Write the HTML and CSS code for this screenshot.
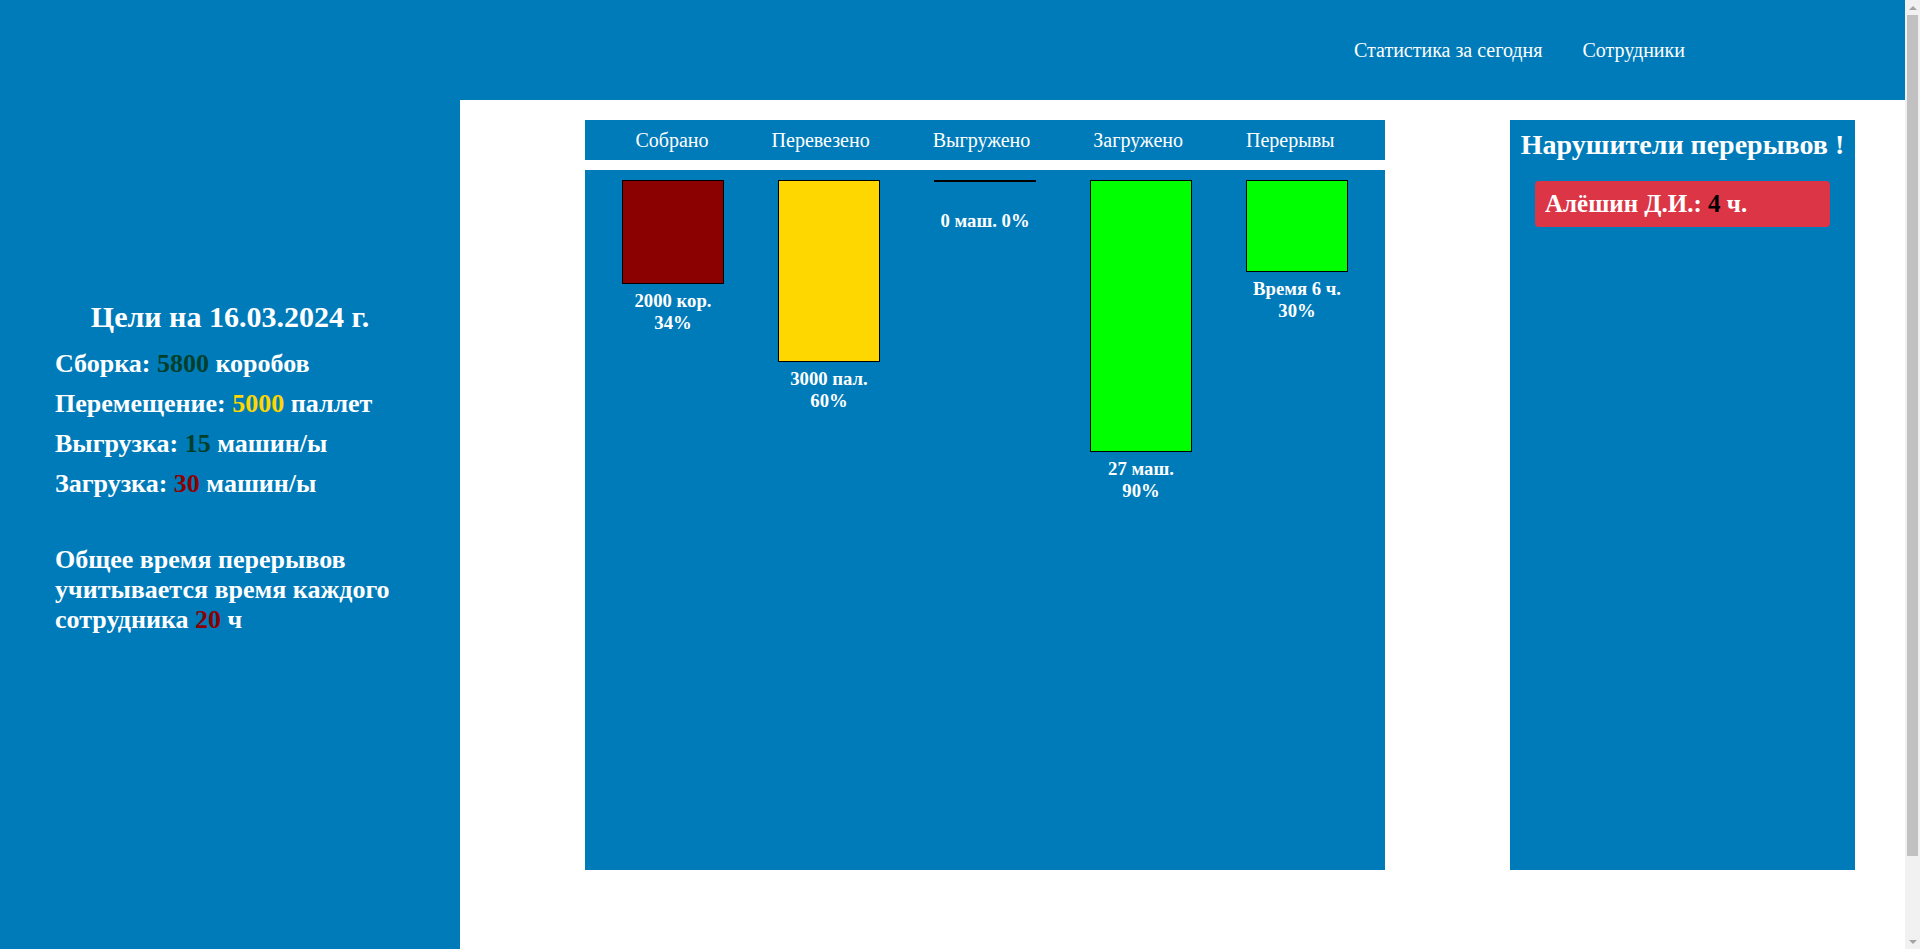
FILE: index.html
```html
<!DOCTYPE html>
<html lang="ru">
<head>
<meta charset="utf-8">
<title>Статистика</title>
<link rel="stylesheet" href="styles.css">
</head>
<body>
<header class="topbar">
  <nav class="nav">
    <a class="nav-link" href="#">Статистика за сегодня</a>
    <a class="nav-link" href="#">Сотрудники</a>
  </nav>
</header>
<div class="layout">
  <aside class="sidebar">
    <h2 class="goals-title">Цели на 16.03.2024 г.</h2>
    <div class="goals">
      <div class="goal">Сборка: <span class="num-green">5800</span> коробов</div>
      <div class="goal">Перемещение: <span class="num-gold">5000</span> паллет</div>
      <div class="goal">Выгрузка: <span class="num-green">15</span> машин/ы</div>
      <div class="goal">Загрузка: <span class="num-red">30</span> машин/ы</div>
    </div>
    <p class="breaks-note">Общее время перерывов учитывается время каждого сотрудника <span class="num-red">20</span> ч</p>
  </aside>
  <main class="content">
    <section class="chart">
      <div class="chart-head">
        <span>Собрано</span>
        <span>Перевезено</span>
        <span>Выгружено</span>
        <span>Загружено</span>
        <span>Перерывы</span>
      </div>
      <div class="chart-body">
        <div class="col">
          <div class="bar bar-red" style="height: 102px"></div>
          <div class="bar-label">2000 кор.<br>34%</div>
        </div>
        <div class="col">
          <div class="bar bar-gold" style="height: 180px"></div>
          <div class="bar-label">3000 пал.<br>60%</div>
        </div>
        <div class="col">
          <div class="bar bar-green" style="height: 0px"></div>
          <div class="bar-label bar-label-empty">0 маш. 0%</div>
        </div>
        <div class="col">
          <div class="bar bar-green" style="height: 270px"></div>
          <div class="bar-label">27 маш.<br>90%</div>
        </div>
        <div class="col">
          <div class="bar bar-green" style="height: 90px"></div>
          <div class="bar-label">Время 6 ч.<br>30%</div>
        </div>
      </div>
    </section>
    <section class="violators">
      <h2 class="violators-title">Нарушители перерывов !</h2>
      <div class="violator">Алёшин Д.И.: <span class="num-black">4</span> ч.</div>
    </section>
  </main>
</div>
<div class="scrollbar" aria-hidden="true">
  <div class="scroll-arrow scroll-arrow-up"></div>
  <div class="scroll-track"><div class="scroll-thumb"></div></div>
  <div class="scroll-arrow scroll-arrow-down"></div>
</div>
</body>
</html>
```

FILE: styles.css
```css
* { box-sizing: border-box; }

html, body {
  margin: 0;
  padding: 0;
}

body {
  background: #007bba;
  font-family: "Liberation Serif", "Times New Roman", serif;
  color: #fff;
}

.topbar {
  height: 100px;
  display: flex;
  align-items: center;
  justify-content: flex-end;
  padding: 0 235px 0 0;
}

.nav {
  display: flex;
  gap: 40px;
}

.nav-link {
  color: #fff;
  text-decoration: none;
  font-size: 20px;
}

.layout {
  display: flex;
  min-height: 937px;
}

.sidebar {
  width: 460px;
  flex: none;
  padding: 200px 55px 0;
}

.goals-title {
  margin: 0;
  font-size: 30px;
  font-weight: bold;
  text-align: center;
}

.goals {
  margin-top: 15px;
  display: flex;
  flex-direction: column;
  gap: 10px;
}

.goal,
.breaks-note {
  font-size: 26px;
  font-weight: bold;
}

.breaks-note {
  margin: 46px 0 0;
}

.num-green { color: #00402a; }
.num-gold { color: #ffd700; }
.num-red { color: #8b0000; }
.num-black { color: #000; }

.content {
  flex: 1;
  background: #fff;
  padding: 20px 0 0 125px;
  display: flex;
  align-items: flex-start;
  gap: 125px;
}

.chart {
  width: 800px;
  flex: none;
}

.chart-head {
  height: 40px;
  background: #007bba;
  display: flex;
  align-items: center;
  justify-content: center;
  gap: 63px;
  font-size: 20px;
}

.chart-body {
  margin-top: 10px;
  height: 700px;
  background: #007bba;
  padding: 10px;
  display: flex;
}

.col {
  width: 156px;
  display: flex;
  flex-direction: column;
  align-items: center;
}

.bar {
  box-sizing: content-box;
  width: 100px;
  border: 1px solid #000;
}

.bar-red { background: #8b0000; }
.bar-gold { background: #ffd700; }
.bar-green { background: #00ff00; }

.bar-label {
  margin-top: 6px;
  font-size: 18.72px;
  font-weight: bold;
  text-align: center;
  width: 100px;
}

.bar-label-empty {
  margin-top: 28px;
  width: auto;
}

.violators {
  width: 345px;
  flex: none;
  height: 750px;
  background: #007bba;
  padding-top: 9px;
}

.violators-title {
  margin: 0;
  font-size: 28px;
  font-weight: bold;
  text-align: center;
  white-space: nowrap;
}

.violator {
  margin: 20px 25px 0;
  background: #dc3545;
  border-radius: 4px;
  padding: 9px 10px;
  font-size: 25px;
  font-weight: bold;
}

.scrollbar {
  position: fixed;
  top: 0;
  right: 0;
  width: 15px;
  height: 100vh;
  background: #f1f1f1;
  display: flex;
  flex-direction: column;
}

.scroll-arrow {
  height: 15px;
  flex: none;
  display: flex;
  align-items: center;
  justify-content: center;
}

.scroll-arrow::before {
  content: "";
  border-left: 4px solid transparent;
  border-right: 4px solid transparent;
}

.scroll-arrow-up::before {
  border-bottom: 4px solid #a3a3a3;
}

.scroll-arrow-down::before {
  border-top: 4px solid #a3a3a3;
}

.scroll-track {
  flex: 1;
  padding: 0 2px;
}

.scroll-thumb {
  height: 841px;
  background: #c1c1c1;
}
```
